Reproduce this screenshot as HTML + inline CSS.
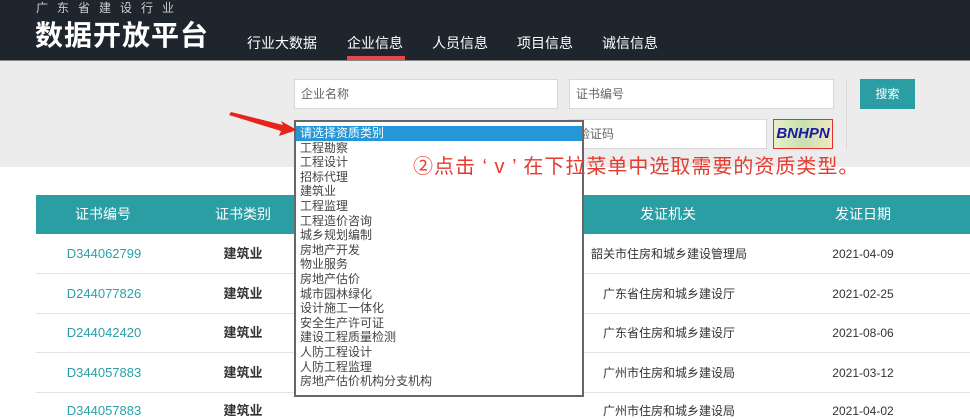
<!DOCTYPE html>
<html><head><meta charset="utf-8"><style>
*{margin:0;padding:0;box-sizing:border-box}
body{width:970px;height:409px;overflow:hidden;background:#fff;font-family:"Liberation Sans","Noto Sans CJK SC",sans-serif;position:relative}
.a{position:absolute}
.hdr{left:0;top:0;width:970px;height:60px;background:#1e252c}
.gray{left:0;top:60px;width:970px;height:107px;background:#ececec;border-top:1px solid #888}
.inp{background:#fff;border:1px solid #d8d8d8;font-size:12px;color:#666;padding-left:6px;line-height:28px}
.th{left:36px;top:195px;width:934px;height:39px;background:#2a9ea3}
.row{left:36px;width:934px;height:40px;border-bottom:1px solid #e2e2e2}
.c{position:absolute;font-size:13px;line-height:16px;height:16px;text-align:center;transform:translateX(-50%);white-space:nowrap}
.dd{left:294px;top:120px;width:290px;height:277px;background:#fff;border:2px solid #666;font-size:12px;color:#444;line-height:14.6px;padding-top:4px}
.dd div{padding-left:4px;height:14.6px}
</style></head><body>
<div class="a hdr"></div>
<div class="a" style="left:36px;top:1px;color:#ccc;font-size:12px;line-height:14px;letter-spacing:9px">广东省建设行业</div>
<div class="a" style="left:35px;top:18px;color:#fff;font-size:28px;font-weight:bold;letter-spacing:1px;line-height:36px">数据开放平台</div>
<div class="a" style="left:247px;top:34px;color:#fff;font-size:14px;line-height:18px">行业大数据</div>
<div class="a" style="left:347px;top:34px;color:#fff;font-size:14px;line-height:18px">企业信息</div>
<div class="a" style="left:347px;top:56px;width:58px;height:4px;background:#e6474a"></div>
<div class="a" style="left:432px;top:34px;color:#fff;font-size:14px;line-height:18px">人员信息</div>
<div class="a" style="left:517px;top:34px;color:#fff;font-size:14px;line-height:18px">项目信息</div>
<div class="a" style="left:602px;top:34px;color:#fff;font-size:14px;line-height:18px">诚信信息</div>
<div class="a gray"></div>
<div class="a inp" style="left:294px;top:79px;width:264px;height:30px">企业名称</div>
<div class="a inp" style="left:569px;top:79px;width:265px;height:30px">证书编号</div>
<div class="a inp" style="left:569px;top:119px;width:198px;height:30px;padding-left:8px">验证码</div>
<div class="a" style="left:773px;top:119px;width:60px;height:30px;border:1px solid #e03030;background:linear-gradient(90deg,#e8f0c8,#c8e0b0,#f0e8c0);color:#1a1aa0;font-size:15px;font-weight:bold;font-style:italic;text-align:center;line-height:28px">BNHPN</div>
<div class="a" style="left:846px;top:80px;width:1px;height:70px;background:#dcdcdc"></div>
<div class="a" style="left:860px;top:79px;width:55px;height:30px;background:#2a9ea3;color:#fff;font-size:12px;text-align:center;line-height:30px">搜索</div>
<div class="a th"></div>
<div class="c" style="left:103px;top:206px;color:#fff;font-size:14px">证书编号</div>
<div class="c" style="left:243px;top:206px;color:#fff;font-size:14px">证书类别</div>
<div class="c" style="left:668px;top:206px;color:#fff;font-size:14px">发证机关</div>
<div class="c" style="left:863px;top:206px;color:#fff;font-size:14px">发证日期</div>
<div class="a row" style="top:234px"></div>
<div class="a row" style="top:274px"></div>
<div class="a row" style="top:313px"></div>
<div class="a row" style="top:353px"></div>
<div class="c" style="left:104px;top:246px;color:#2aa0a8">D344062799</div><div class="c" style="left:243px;top:246px;font-weight:bold;color:#333">建筑业</div><div class="c" style="left:669px;top:246px;color:#333;font-size:12px">韶关市住房和城乡建设管理局</div><div class="c" style="left:863px;top:246px;color:#333;font-size:12px">2021-04-09</div>
<div class="c" style="left:104px;top:286px;color:#2aa0a8">D244077826</div><div class="c" style="left:243px;top:286px;font-weight:bold;color:#333">建筑业</div><div class="c" style="left:669px;top:286px;color:#333;font-size:12px">广东省住房和城乡建设厅</div><div class="c" style="left:863px;top:286px;color:#333;font-size:12px">2021-02-25</div>
<div class="c" style="left:104px;top:325px;color:#2aa0a8">D244042420</div><div class="c" style="left:243px;top:325px;font-weight:bold;color:#333">建筑业</div><div class="c" style="left:669px;top:325px;color:#333;font-size:12px">广东省住房和城乡建设厅</div><div class="c" style="left:863px;top:325px;color:#333;font-size:12px">2021-08-06</div>
<div class="c" style="left:104px;top:365px;color:#2aa0a8">D344057883</div><div class="c" style="left:243px;top:365px;font-weight:bold;color:#333">建筑业</div><div class="c" style="left:669px;top:365px;color:#333;font-size:12px">广州市住房和城乡建设局</div><div class="c" style="left:863px;top:365px;color:#333;font-size:12px">2021-03-12</div>
<div class="c" style="left:104px;top:403px;color:#2aa0a8">D344057883</div><div class="c" style="left:243px;top:403px;font-weight:bold;color:#333">建筑业</div><div class="c" style="left:669px;top:403px;color:#333;font-size:12px">广州市住房和城乡建设局</div><div class="c" style="left:863px;top:403px;color:#333;font-size:12px">2021-04-02</div>
<div class="a dd">
<div style="background:#2596d6;color:#fff">请选择资质类别</div>
<div>工程勘察</div><div>工程设计</div><div>招标代理</div><div>建筑业</div><div>工程监理</div><div>工程造价咨询</div><div>城乡规划编制</div><div>房地产开发</div><div>物业服务</div><div>房地产估价</div><div>城市园林绿化</div><div>设计施工一体化</div><div>安全生产许可证</div><div>建设工程质量检测</div><div>人防工程设计</div><div>人防工程监理</div><div>房地产估价机构分支机构</div>
</div>
<div class="a" style="left:413px;top:154px;color:#e53a2f;font-size:20px;line-height:26px;letter-spacing:1px;white-space:nowrap">②点击 ‘ v ’ 在下拉菜单中选取需要的资质类型。</div>
<svg class="a" style="left:225px;top:105px" width="75" height="35"><polygon points="6,7 58,20 56,16 72,25 54,31 56,26 4,10" fill="#e8231c"/></svg>
</body></html>
